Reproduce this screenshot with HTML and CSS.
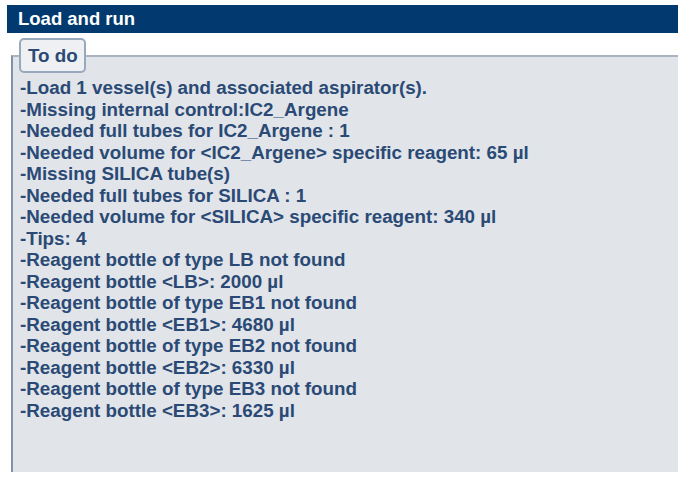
FILE: index.html
```html
<!DOCTYPE html>
<html lang="en">

<head>
  <meta charset="UTF-8">
  <meta name="viewport" content="width=device-width, initial-scale=1.0">
  <title>Load and run</title>
  <link rel="stylesheet" href="styles.css">
</head>
<body>
  <div class="panel">
    <div class="panel-title">Load and run</div>
    <fieldset class="todo">
      <legend class="todo-legend">To do</legend>
      <div class="todo-list">
        <p class="line">-Load 1 vessel(s) and associated aspirator(s).</p>
        <p class="line">-Missing internal control:IC2_Argene</p>
        <p class="line">-Needed full tubes for IC2_Argene : 1</p>
        <p class="line">-Needed volume for &lt;IC2_Argene&gt; specific reagent: 65 µl</p>
        <p class="line">-Missing SILICA tube(s)</p>
        <p class="line">-Needed full tubes for SILICA : 1</p>
        <p class="line">-Needed volume for &lt;SILICA&gt; specific reagent: 340 µl</p>
        <p class="line">-Tips: 4</p>
        <p class="line">-Reagent bottle of type LB not found</p>
        <p class="line">-Reagent bottle &lt;LB&gt;: 2000 µl</p>
        <p class="line">-Reagent bottle of type EB1 not found</p>
        <p class="line">-Reagent bottle &lt;EB1&gt;: 4680 µl</p>
        <p class="line">-Reagent bottle of type EB2 not found</p>
        <p class="line">-Reagent bottle &lt;EB2&gt;: 6330 µl</p>
        <p class="line">-Reagent bottle of type EB3 not found</p>
        <p class="line">-Reagent bottle &lt;EB3&gt;: 1625 µl</p>
      </div>
    </fieldset>
  </div>
</body>

</html>
```

FILE: styles.css
```css
    body {
      margin: 0;
      background-color: #ffffff;
      font-family: 'Liberation Sans', Arial, sans-serif;
    }
    .panel {
      margin: 5px 9px 0 7px;
    }
    .panel-title {
      background-color: #023a6f;
      color: white;
      font-weight: bold;
      font-size: 18.5px;
      line-height: 28px;
      height: 28px;
      padding-left: 11px;
    }
    .todo {
      margin: 5px 0 0 4px;
      padding: 4px 8px 0 7px;
      height: 428px;
      background-color: #e1e4e9;
      border: none;
      border-top: 2px solid #a9b4c0;
      border-left: 2px solid #7f92ab;
      box-sizing: content-box;
    }
    .todo-legend {
      color: #2a4a75;
      font-weight: bold;
      font-size: 18.8px;
      background-color: #eef0f3;
      border: 2px solid #99a9bc;
      border-radius: 5px;
      padding: 6px 6px 6px 7px;
      margin-left: -1px;
      line-height: 19px;
    }
    .todo-list .line {
      margin: 0;
      color: #2a4a75;
      font-weight: bold;
      font-size: 18.8px;
      line-height: 21.5px;
      white-space: nowrap;
    }
```
